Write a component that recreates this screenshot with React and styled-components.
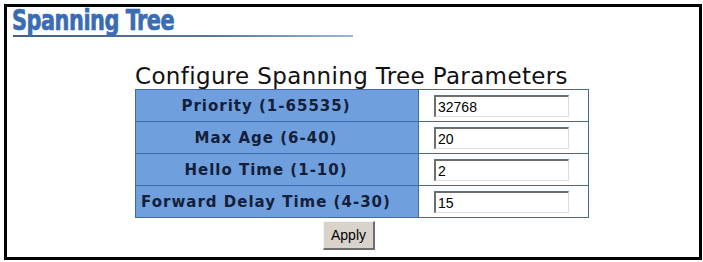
import React from 'react';
import styled, { createGlobalStyle } from 'styled-components';

const GlobalStyle = createGlobalStyle`
    body {
        margin: 0;
        background: #fff;
        font-family: "DejaVu Sans", Verdana, sans-serif;
    }
`;

const Frame = styled.div`
    box-sizing: border-box;
    margin: 4px 0 0 4px;
    width: 698px;
    height: 256px;
    border: 3px solid #000;
    padding: 1px 0 0 5px;
`;

const Heading = styled.div`
    display: inline-block;
    font-family: "DejaVu Sans Condensed", "DejaVu Sans", sans-serif;
    font-weight: bold;
    font-size: 29px;
    line-height: 25px;
    color: #3a6cb4;
    letter-spacing: -0.6px;
    transform: scaleX(0.8);
    transform-origin: left;
    -webkit-text-stroke: 0.7px #3a6cb4;
`;

const Rule = styled.div`
    width: 340px;
    height: 2px;
    margin: 1px 0 0 1px;
    background: linear-gradient(to right, #43607e 0%, #5b7897 60%, #9fb7d6 100%);
`;

const Content = styled.div`
    margin: 26px 0 0 123px;
    width: 454px;
    display: flex;
    flex-direction: column;
    align-items: flex-start;
`;

const Title = styled.div`
    font-size: 23px;
    line-height: 26px;
    color: #111;
    letter-spacing: 0.35px;
`;

const Table = styled.table`
    width: 454px;
    border-collapse: collapse;
    border: 1px solid #4c78b4;
`;

const Label = styled.td`
    width: 260px;
    height: 31px;
    padding: 0 22px 0 0;
    background: #6f9fdd;
    border: 1px solid #3f6aa6;
    text-align: center;
    font-weight: bold;
    font-size: 15px;
    letter-spacing: 1px;
    color: #14203a;
    white-space: nowrap;
`;

const Value = styled.td`
    padding: 0 0 0 15px;
    background: #fff;
    border: 1px solid #3f6aa6;
`;

const Input = styled.input`
    box-sizing: border-box;
    display: block;
    width: 135px;
    height: 22px;
    padding: 1px 2px 0;
    font-family: "Liberation Sans", Arial, sans-serif;
    font-size: 14px;
    color: #000;
    background: #fff;
    border-style: solid;
    border-width: 2px 1px 1px 2px;
    border-color: #6e6e6e #dcdcdc #dcdcdc #6e6e6e;
    outline: none;
`;

const Button = styled.button`
    margin: 3px 0 0 188px;
    width: 52px;
    height: 29px;
    padding: 0;
    font-family: "Liberation Sans", Arial, sans-serif;
    font-size: 14px;
    color: #000;
    background: #d8d4cc;
    border-style: solid;
    border-width: 1px 2px 2px 1px;
    border-color: #f4f4f4 #6e6e6e #6e6e6e #f4f4f4;
`;

const rows = [
    { label: 'Priority (1-65535)', value: '32768' },
    { label: 'Max Age (6-40)', value: '20' },
    { label: 'Hello Time (1-10)', value: '2' },
    { label: 'Forward Delay Time (4-30)', value: '15' },
];

const App = () => {
    return (
        <>
            <GlobalStyle />
            <Frame>
                <Heading>Spanning Tree</Heading>
                <Rule />
                <Content>
                    <Title>Configure Spanning Tree Parameters</Title>
                    <Table>
                        <tbody>
                            {rows.map((r) => (
                                <tr key={r.label}>
                                    <Label>{r.label}</Label>
                                    <Value>
                                        <Input type="text" defaultValue={r.value} />
                                    </Value>
                                </tr>
                            ))}
                        </tbody>
                    </Table>
                    <Button>Apply</Button>
                </Content>
            </Frame>
        </>
    );
};

export default App;
